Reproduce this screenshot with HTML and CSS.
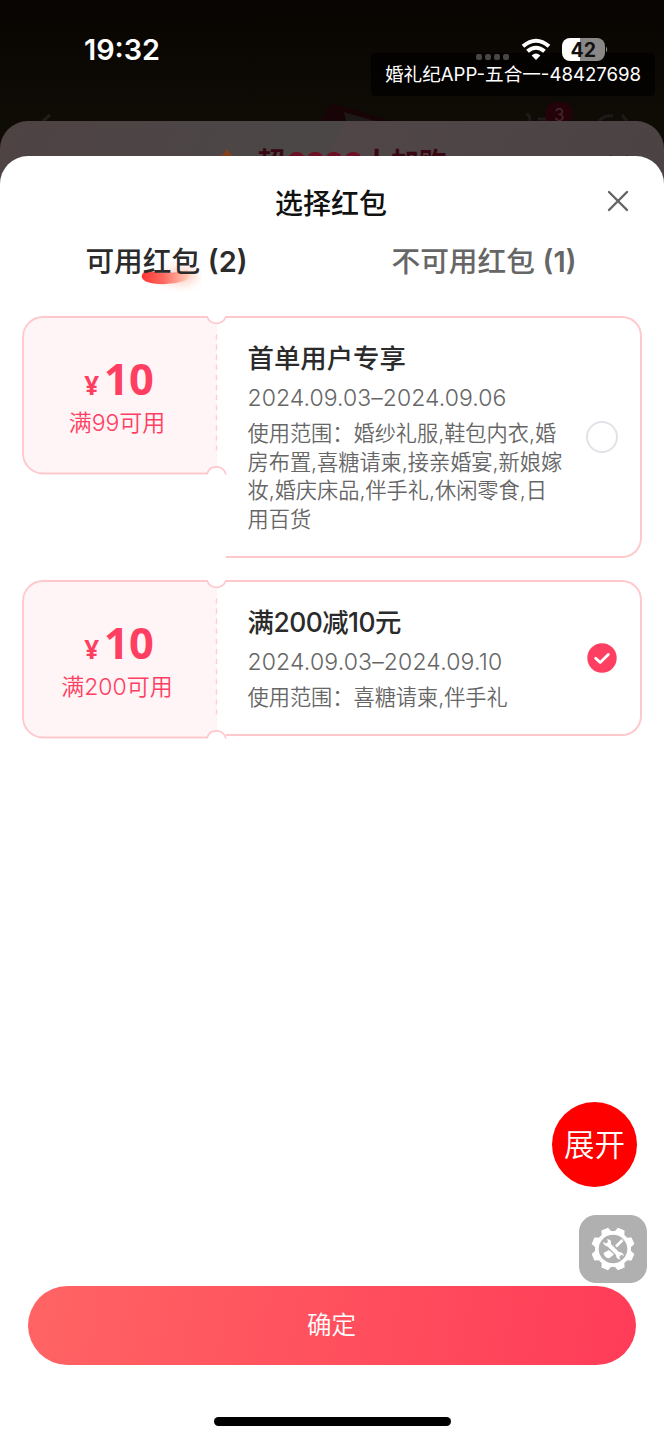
FILE: index.html
```
<!DOCTYPE html>
<html lang="zh-CN">
<head>
<meta charset="utf-8">
<title>选择红包</title>
<link rel="stylesheet" href="styles.css">
</head>
<body>
<svg class="defs" width="0" height="0" aria-hidden="true">
  <symbol id="stub" viewBox="0 0 206 160">
    <path d="M195 7.5V151.5Q188.500 151.500 185.500 157.500H21A20 20 0 0 1 1 137.500V21A20 20 0 0 1 21 1H185.500Q188.500 7.500 195 7.500Z" fill="#fff4f6"/>
    <path d="M205 1H203.800C200.500 9.500 188.500 9.500 185.200 1H21A20 20 0 0 0 1 21V137.500A20 20 0 0 0 21 157.500H185.200C188 148.500 201 148.500 204 158.500" fill="none" stroke="#ffc9cc" stroke-width="1.800"/>
    <path d="M194.500 18.500V140" stroke="#ffd0d3" stroke-width="1.500" stroke-dasharray="5 5.100"/>
  </symbol>
</svg>
<div class="screen">
  <div class="page-behind">
    <svg width="664" height="121" viewBox="0 0 664 121">
      <path d="M43 121L50 115" stroke="#201e1c" stroke-width="3" fill="none"/>
      <path d="M321 121L331 103L391 121Z" fill="#180306"/>
      <path d="M344 112L375 121H346Z" fill="#1c1918"/>
      <path d="M526 115Q530 113 530 121M538 119H548M599 121Q604 115 613 116M622 115L627 121" stroke="#1d1b1a" stroke-width="3" fill="none"/>
      <rect x="545" y="102" width="28" height="24" rx="12" fill="#24020a"/>
      <text class="cart-count" x="554" y="121">3</text>
    </svg>
  </div>
  <header class="status">
    <span class="clock">19:32</span>
    <svg class="signals" width="132" height="30" viewBox="0 0 132 30">
      <g fill="#484645"><rect x="0" y="17" width="6" height="6" rx="2"/><rect x="9" y="17" width="6" height="6" rx="2"/><rect x="18" y="17" width="6" height="6" rx="2"/><rect x="27" y="17" width="6" height="6" rx="2"/></g>
      <g fill="none" stroke="#fff" stroke-width="4"><path d="M47 9.300Q60 -1.800 73 9.300"/><path d="M51.500 14.300Q60 7.200 68.500 14.300"/></g>
      <path d="M60 23L55.600 18.500Q60 14.700 64.400 18.500Z" fill="#fff"/>
      <path d="M104.500 1H94a8 8 0 0 0-8 8v7a8 8 0 0 0 8 8h10.500Z" fill="#fff"/>
      <path d="M104.500 1H121a8 8 0 0 1 8 8v7a8 8 0 0 1-8 8h-16.500Z" fill="#8a8887"/>
      <path d="M130 9.500Q132.500 12.500 130 15.500Z" fill="#8a8887"/>
      <text class="battery" x="107.300" y="19.500">42</text>
    </svg>
  </header>
  <div class="build-tag">婚礼纪APP-五合一-48427698</div>
  <section class="sheet-behind">
    <svg class="flame" width="16" height="20" viewBox="0 0 16 20"><path d="M8 0Q10 3 14 7Q16 18 8 19Q0 18 2 7Q6 4 8 0Z" fill="#854019"/></svg>
    <p class="behind-title"><span>超</span><b>9800</b><span>人加购</span></p>
    <svg class="behind-close" width="22" height="22" viewBox="0 0 22 22"><path d="M2 2L20 20M20 2L2 20" stroke="#211e1e" stroke-width="2.500"/></svg>
  </section>
  <main class="sheet">
    <div class="sheet-head">
      <h1>选择红包</h1>
      <svg class="close" width="22" height="22" viewBox="0 0 22 22"><path d="M2 2L20 20M20 2L2 20" stroke="#646464" stroke-width="2.400" stroke-linecap="round"/></svg>
    </div>
    <nav class="tabs">
      <div class="tab active">
        <svg class="swoosh" width="64" height="34" viewBox="0 0 64 34">
          <defs>
            <linearGradient id="sw"><stop offset="0" stop-color="#ff3530"/><stop offset=".45" stop-color="#ff6b62"/><stop offset="1" stop-color="#ffd3bd"/></linearGradient>
            <filter id="bl" x="-40%" y="-60%" width="180%" height="220%"><feGaussianBlur stdDeviation="4"/></filter>
          </defs>
          <ellipse cx="42" cy="15" rx="17" ry="9" fill="#ffcabc" opacity=".8" filter="url(#bl)"/>
          <path d="M6 11Q3 14 4 17Q6 21 15 22.500Q31 25 46 20Q53 17 52 13Q51 8 45 10Q25 14 13 10Q8 9 6 11Z" fill="url(#sw)"/>
        </svg>
        <span>可用红包 <i>(2)</i></span>
      </div>
      <div class="tab"><span>不可用红包 <i>(1)</i></span></div>
    </nav>
    <div class="coupons">
      <article class="coupon tall">
        <div class="stub">
          <svg class="stub-art" width="206" height="160"><use href="#stub"/></svg>
          <div class="amount"><small>¥</small>10</div>
          <div class="limit">满99可用</div>
        </div>
        <div class="info">
          <div class="text">
            <h2>首单用户专享</h2>
            <time>2024.09.03–2024.09.06</time>
            <p>使用范围：婚纱礼服,鞋包内衣,婚<br>房布置,喜糖请柬,接亲婚宴,新娘嫁<br>妆,婚庆床品,伴手礼,休闲零食,日<br>用百货</p>
          </div>
          <span class="radio"></span>
        </div>
      </article>
      <article class="coupon short">
        <div class="stub">
          <svg class="stub-art" width="206" height="160"><use href="#stub"/></svg>
          <div class="amount"><small>¥</small>10</div>
          <div class="limit">满200可用</div>
        </div>
        <div class="info">
          <div class="text">
            <h2 class="mixed">满200减10元</h2>
            <time class="narrow">2024.09.03–2024.09.10</time>
            <p>使用范围：喜糖请柬,伴手礼</p>
          </div>
          <svg class="checked" width="30" height="30" viewBox="0 0 30 30"><circle cx="15" cy="15" r="14.700" fill="#ff3f61"/><path d="M8.700 15.200L13.200 19.500L21.300 11.500" fill="none" stroke="#fff" stroke-width="2.800" stroke-linecap="round" stroke-linejoin="round"/></svg>
        </div>
      </article>
    </div>
    <footer>
      <button class="confirm">确定</button>
      <div class="home-bar"></div>
    </footer>
  </main>
  <div class="expand">展开</div>
  <div class="tools">
    <svg width="44" height="44" viewBox="-22 -22 44 44">
      <g fill="#fff">
        <circle r="18"/>
        <g transform="rotate(22.500)">
          <path id="tooth" d="M-5.500 -16L-3.600 -21.600H3.600L5.500 -16Z"/>
          <use href="#tooth" transform="rotate(45)"/><use href="#tooth" transform="rotate(90)"/><use href="#tooth" transform="rotate(135)"/><use href="#tooth" transform="rotate(180)"/><use href="#tooth" transform="rotate(225)"/><use href="#tooth" transform="rotate(270)"/><use href="#tooth" transform="rotate(315)"/>
        </g>
      </g>
      <circle r="14.300" fill="#b0b0b0"/>
      <path d="M9.500 -9L3 -2.500" stroke="#fff" stroke-width="2.600"/>
      <path d="M-9.500 4L-4 1L1 5.500L-3.500 9Q-8 10 -9.500 4Z" fill="#fff"/>
      <path d="M-6 -6L7 7" stroke="#b0b0b0" stroke-width="5.600"/>
      <path d="M-6 -6L7 7" stroke="#fff" stroke-width="4"/>
      <path d="M-10 -7Q-9 -2 -4 -3L-2 -5Q-1 -9.500 -6 -10L-4.800 -6.800L-6.800 -5.500ZM11 7Q10 2.500 5 3L3 5Q2.500 10 7.500 10.500L6 7.500L8 5.500Z" fill="#fff"/>
    </svg>
  </div>
</div>
</body>
</html>
```
FILE: styles.css
```
* { box-sizing: border-box; margin: 0; padding: 0; }
body { font-family: Inter, "Noto Sans CJK SC", sans-serif; background: #fff; }
.defs { position: absolute; }
.screen {
  position: relative; width: 664px; height: 1440px; overflow: hidden;
  background: linear-gradient(#080502, #0f0b05 121px);
}
.page-behind { position: absolute; top: 0; left: 0; }
.page-behind svg { display: block; overflow: visible; }
.cart-count { font-size: 17px; fill: #45292e; }
.status {
  height: 121px; padding: 33px 56px 0 84px;
  display: flex; justify-content: space-between; align-items: flex-start;
  position: relative; z-index: 3;
}
.clock { color: #fff; font-size: 28.800px; line-height: 34px; font-weight: 570; letter-spacing: 0; }
.signals { margin-top: 4px; }
.battery { font-size: 19.500px; font-weight: 700; fill: #111; text-anchor: middle; }
.build-tag {
  position: absolute; z-index: 2; left: 371px; top: 53px; width: 284px; height: 43px;
  padding-left: 14px; border-radius: 4px; background: rgba(0,0,0,.65);
  color: #fff; font-size: 18.600px; line-height: 42px; white-space: nowrap;
}
.sheet-behind {
  position: absolute; top: 121px; left: 0; right: 0; height: 80px; padding: 28px 34px 0 219px;
  border-radius: 28px 28px 0 0; display: flex; align-items: flex-start;
  background: linear-gradient(115deg, #4f4344 0%, #4b4747 49%, #504648 49.500%, #4b4343 100%);
}
.behind-title { margin: -6px 0 0 22px; display: flex; font-size: 28px; line-height: 40px; font-weight: 700; color: #390711; }
.behind-title b { color: #6b1025; width: 78px; padding-left: 3px; font-size: 27px; }
.behind-close { margin: 5px 0 0 auto; }
.sheet {
  position: absolute; top: 156px; left: 0; right: 0; bottom: 0; z-index: 4;
  background: #fff; border-radius: 28px 28px 0 0; display: flex; flex-direction: column;
}
.sheet-head { height: 86px; padding: 28px 35px 0 275px; display: flex; justify-content: space-between; }
h1 { font-size: 28px; line-height: 40px; font-weight: 500; color: #111; }
.close { margin-top: 6px; }
.tabs { height: 74px; padding-right: 28px; display: grid; grid-template-columns: 333px 302px; }
.tab { position: relative; display: flex; justify-content: center; font-size: 28.700px; line-height: 39px; font-weight: 500; color: #666; }
.tab span { position: relative; white-space: nowrap; }
.tab i { font-style: normal; font-weight: 600; font-size: 29px; }
.active { color: #2b2b2b; }
.swoosh { position: absolute; left: 138px; top: 19px; }
.coupons { padding: 0 22px; display: flex; flex-direction: column; gap: 21.500px; }
.coupon { display: flex; align-items: flex-start; }
.tall { height: 242px; }
.short { height: 156px; }
.stub { position: relative; width: 204px; height: 156px; padding: 37px 12px 0 0; color: #ff3f61; text-align: center; }
.stub-art { position: absolute; left: 0; top: 0; }
.amount { position: relative; left: 1px; font: 700 43.500px/50px "Noto Sans", "Noto Sans CJK SC", sans-serif; }
.amount small { font-size: 26px; margin-right: 5px; }
.limit { position: relative; left: -1px; margin-top: -5px; font-size: 23px; line-height: 36px; font-weight: 350; }
.info {
  width: 416px; height: 100%; border: 2px solid #ffc9cc; border-left: 0; border-radius: 0 20px 20px 0;
  display: flex; align-items: center; justify-content: space-between; padding: 0 22px 0 21.500px;
}
.text { height: 100%; padding-top: 21px; }
h2 { font-size: 26.400px; line-height: 38px; font-weight: 500; color: #2b2b2b; white-space: nowrap; }
.mixed { letter-spacing: -.5px; }
time { display: block; margin-top: 4px; font-size: 23px; line-height: 34px; font-weight: 350; letter-spacing: .05px; color: #666; white-space: nowrap; }
.narrow { letter-spacing: .15px; }
.text p { margin-top: 4px; font-size: 21.200px; line-height: 28.700px; font-weight: 350; color: #666; white-space: nowrap; }
.radio { width: 32px; height: 32px; border: 2px solid #e1e3e8; border-radius: 50%; flex: none; }
.checked { flex: none; margin-right: 1px; }
footer { margin-top: auto; height: 154px; padding: 0 28px; display: flex; flex-direction: column; align-items: center; gap: 52px; }
.confirm {
  width: 608px; height: 79px; border: 0; border-radius: 40px; color: #fff;
  font: 350 24.500px/79px Inter, "Noto Sans CJK SC", sans-serif;
  padding: 0 1px 0 0;
  background: linear-gradient(100deg, #ff6464, #ff3c58);
}
.home-bar { width: 237px; height: 9px; border-radius: 5px; background: #000; }
.expand {
  position: absolute; z-index: 5; left: 552px; top: 1102px; width: 85px; height: 85px; border-radius: 50%;
  background: #f00; color: #fff; font-size: 30.500px; line-height: 85px; text-align: center; font-weight: 350;
}
.tools {
  position: absolute; z-index: 5; left: 579px; top: 1215px; width: 68px; height: 68px; border-radius: 17px;
  background: #b0b0b0; display: flex; align-items: center; justify-content: center;
}
```
